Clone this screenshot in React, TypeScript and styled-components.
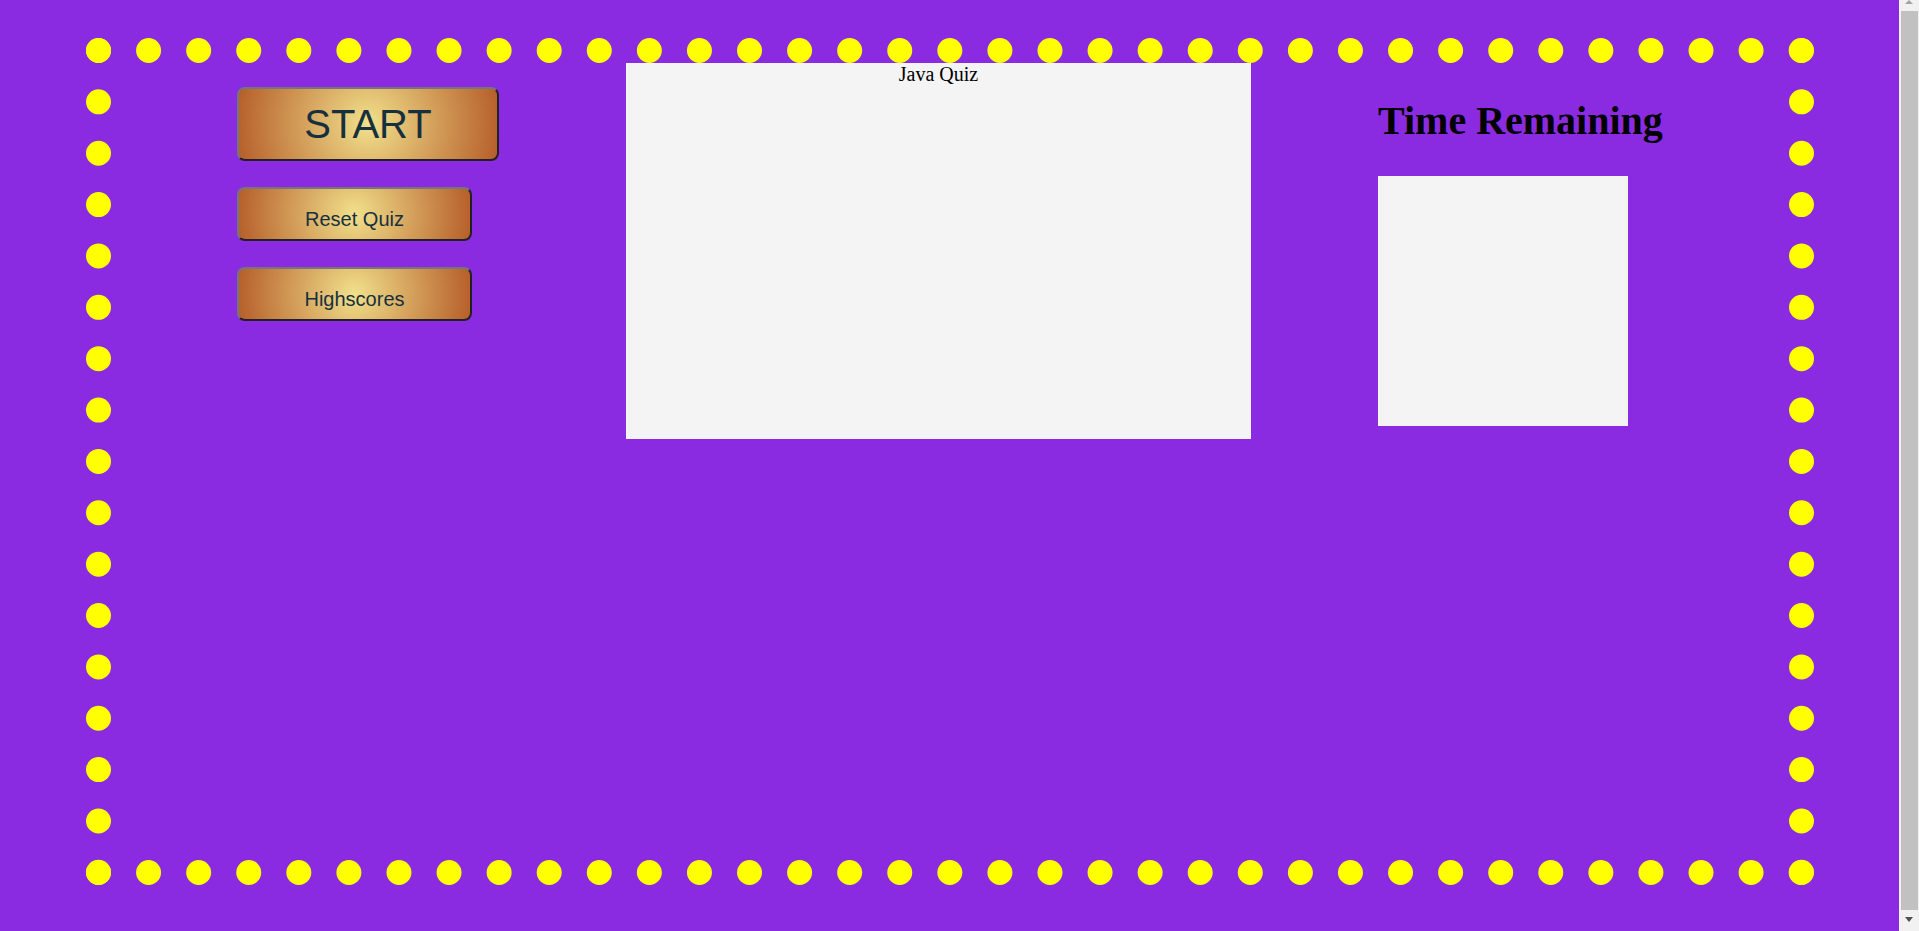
import React from "react";
import styled, { createGlobalStyle, css } from "styled-components";

const GlobalStyle = createGlobalStyle`
  html, body {
    margin: 0;
    padding: 0;
  }
  body {
    background: #8a2be2;
    font-family: "Liberation Serif", "Times New Roman", serif;
    color: #000;
  }
`;

const Page = styled.div`
  padding: 38px 0 48px 86px;
`;

const Frame = styled.main`
  box-sizing: border-box;
  width: 1728px;
  height: 847px;
  border: 25px dotted #ffff00;
  display: flex;
  align-items: flex-start;
`;

const ControlColumn = styled.nav`
  box-sizing: border-box;
  width: 515px;
  flex: none;
  padding: 24px 0 0 126px;
  display: flex;
  flex-direction: column;
  align-items: flex-start;
  gap: 26px;
`;

const GoldButton = styled.button<{ $size: "large" | "small" }>`
  box-sizing: border-box;
  border: 2px outset #767676;
  border-radius: 8px;
  background: radial-gradient(circle, #f1e08b 0%, #b65e2a 100%);
  color: #17303e;
  font-family: "Liberation Sans", Arial, sans-serif;
  text-align: center;
  cursor: pointer;
  ${({ $size }) =>
    $size === "large"
      ? css`
          width: 262px;
          height: 74px;
          padding: 12px 0 12px;
          font-size: 40px;
          line-height: 46px;
        `
      : css`
          width: 235px;
          height: 54px;
          padding: 19px 0 8px;
          font-size: 20px;
          line-height: 23px;
        `}
`;

const QuizPanel = styled.section`
  width: 625px;
  height: 376px;
  flex: none;
  background: #f4f4f4;
  text-align: center;
  font-size: 20px;
  line-height: 23px;
`;

const TimerColumn = styled.aside`
  padding-left: 127px;
  display: flex;
  flex-direction: column;
  align-items: flex-start;
`;

const TimerTitle = styled.h1`
  margin: 35px 0 32px;
  font-family: "Liberation Serif", "Times New Roman", serif;
  font-weight: bold;
  font-size: 40px;
  line-height: 46px;
  white-space: nowrap;
`;

const TimerBox = styled.div`
  width: 250px;
  height: 250px;
  background: #f4f4f4;
`;

/* Window scrollbar drawn over the page's right edge */
const ScrollRail = styled.div`
  position: fixed;
  top: 0;
  right: 0;
  bottom: 0;
  width: 20px;
  background: #f1f1f1;
  display: flex;
  flex-direction: column;
`;

const ScrollArrow = styled.div<{ $dir: "up" | "down" }>`
  flex: none;
  display: flex;
  justify-content: center;
  ${({ $dir }) =>
    $dir === "up"
      ? css`
          height: 11px;
          align-items: flex-start;
          &::before {
            content: "";
            border-left: 4.5px solid transparent;
            border-right: 4.5px solid transparent;
            border-bottom: 4px solid #a3a3a3;
          }
        `
      : css`
          height: 21px;
          align-items: flex-start;
          padding-top: 7px;
          box-sizing: border-box;
          &::before {
            content: "";
            border-left: 4.5px solid transparent;
            border-right: 4.5px solid transparent;
            border-top: 5px solid #505050;
          }
        `}
`;

const ScrollThumb = styled.div`
  flex: 1;
  margin: 0 1px 0 2px;
  background: #c1c1c1;
`;

export default function App() {
  return (
    <>
      <GlobalStyle />
      <Page>
        <Frame>
          <ControlColumn>
            <GoldButton $size="large">START</GoldButton>
            <GoldButton $size="small">Reset Quiz</GoldButton>
            <GoldButton $size="small">Highscores</GoldButton>
          </ControlColumn>
          <QuizPanel>Java Quiz</QuizPanel>
          <TimerColumn>
            <TimerTitle>Time Remaining</TimerTitle>
            <TimerBox />
          </TimerColumn>
        </Frame>
      </Page>
      <ScrollRail aria-hidden="true">
        <ScrollArrow $dir="up" />
        <ScrollThumb />
        <ScrollArrow $dir="down" />
      </ScrollRail>
    </>
  );
}
